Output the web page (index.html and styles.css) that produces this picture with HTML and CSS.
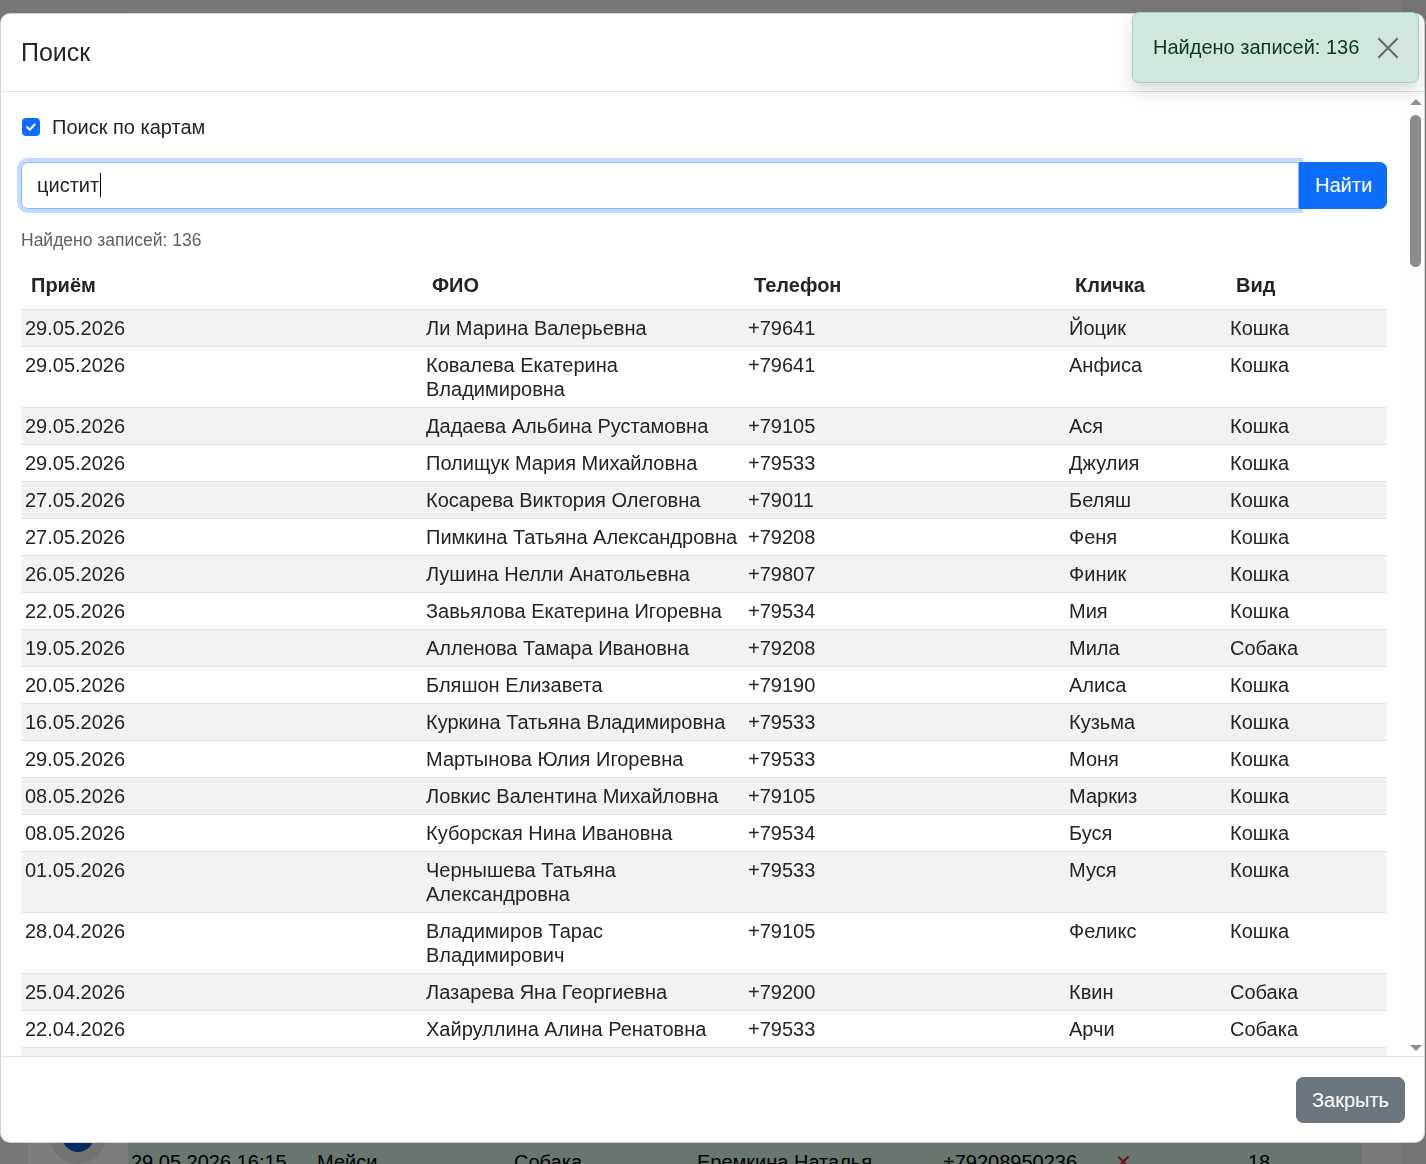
FILE: index.html
```html
<!DOCTYPE html>
<html lang="ru">
<head>
    <meta charset="UTF-8">
    <meta name="viewport" content="width=device-width, initial-scale=1.0">
    <title>Поиск</title>
    <link rel="stylesheet" href="styles.css">
</head>
<body>
    <!-- page behind the modal -->
    <div class="page">
        <aside class="page-side">
            <div class="side-card"><span class="side-avatar"></span></div>
        </aside>
        <main class="page-main">
            <div class="visit-row">
                <span class="v-time">29.05.2026 16:15</span>
                <span class="v-pet">Мейси</span>
                <span class="v-kind">Собака</span>
                <span class="v-owner">Еремкина Наталья</span>
                <span class="v-phone">+79208950236</span>
                <span class="v-mark">✕</span>
                <span class="v-num">18</span>
            </div>
        </main>
        <div class="page-edge"></div>
    </div>

    <div class="backdrop"></div>

    <div class="modal">
        <div class="modal-header">
            <h5 class="modal-title">Поиск</h5>
        </div>

        <div class="modal-main">
            <div class="modal-body">
                <label class="form-check">
                    <span class="check-box">
                        <svg width="12" height="12" viewBox="0 0 12 12"><path d="M2.2 6.3l2.5 2.5 5-5.3" fill="none" stroke="#fff" stroke-width="2" stroke-linecap="round" stroke-linejoin="round"/></svg>
                    </span>
                    Поиск по картам
                </label>

                <div class="search-group">
                    <div class="search-field">цистит<span class="caret"></span></div>
                    <button class="btn btn-primary">Найти</button>
                </div>

                <div class="found-text">Найдено записей: <span id="found-count">136</span></div>

                <table class="results">
                    <colgroup>
                        <col class="c-date">
                        <col class="c-name">
                        <col class="c-phone">
                        <col class="c-pet">
                        <col class="c-kind">
                    </colgroup>
                    <thead>
                        <tr>
                            <th>Приём</th>
                            <th>ФИО</th>
                            <th>Телефон</th>
                            <th>Кличка</th>
                            <th>Вид</th>
                        </tr>
                    </thead>
                    <tbody id="results-body"></tbody>
                </table>
            </div>

            <div class="scroll-rail">
                <span class="rail-arrow rail-up"></span>
                <span class="rail-thumb"></span>
                <span class="rail-rest"></span>
                <span class="rail-arrow rail-down"></span>
            </div>
        </div>

        <div class="modal-footer">
            <button class="btn btn-secondary">Закрыть</button>
        </div>
    </div>

    <div class="toast">
        <span class="toast-text">Найдено записей: 136</span>
        <button class="toast-close" aria-label="Закрыть">
            <svg width="22" height="22" viewBox="0 0 22 22"><path d="M2 2l18 18M20 2L2 20" stroke="#6b6b6b" stroke-width="2.2" stroke-linecap="round"/></svg>
        </button>
    </div>

    <script>
        const rows = [
            ['29.05.2026', 'Ли Марина Валерьевна', '+79641', 'Йоцик', 'Кошка'],
            ['29.05.2026', 'Ковалева Екатерина Владимировна', '+79641', 'Анфиса', 'Кошка'],
            ['29.05.2026', 'Дадаева Альбина Рустамовна', '+79105', 'Ася', 'Кошка'],
            ['29.05.2026', 'Полищук Мария Михайловна', '+79533', 'Джулия', 'Кошка'],
            ['27.05.2026', 'Косарева Виктория Олеговна', '+79011', 'Беляш', 'Кошка'],
            ['27.05.2026', 'Пимкина Татьяна Александровна', '+79208', 'Феня', 'Кошка'],
            ['26.05.2026', 'Лушина Нелли Анатольевна', '+79807', 'Финик', 'Кошка'],
            ['22.05.2026', 'Завьялова Екатерина Игоревна', '+79534', 'Мия', 'Кошка'],
            ['19.05.2026', 'Алленова Тамара Ивановна', '+79208', 'Мила', 'Собака'],
            ['20.05.2026', 'Бляшон Елизавета', '+79190', 'Алиса', 'Кошка'],
            ['16.05.2026', 'Куркина Татьяна Владимировна', '+79533', 'Кузьма', 'Кошка'],
            ['29.05.2026', 'Мартынова Юлия Игоревна', '+79533', 'Моня', 'Кошка'],
            ['08.05.2026', 'Ловкис Валентина Михайловна', '+79105', 'Маркиз', 'Кошка'],
            ['08.05.2026', 'Куборская Нина Ивановна', '+79534', 'Буся', 'Кошка'],
            ['01.05.2026', 'Чернышева Татьяна Александровна', '+79533', 'Муся', 'Кошка'],
            ['28.04.2026', 'Владимиров Тарас Владимирович', '+79105', 'Феликс', 'Кошка'],
            ['25.04.2026', 'Лазарева Яна Георгиевна', '+79200', 'Квин', 'Собака'],
            ['22.04.2026', 'Хайруллина Алина Ренатовна', '+79533', 'Арчи', 'Собака'],
            ['21.04.2026', 'Смирнова Ольга Петровна', '+79105', 'Барсик', 'Кошка'],
            ['19.04.2026', 'Егорова Анна Сергеевна', '+79208', 'Соня', 'Кошка']
        ];

        const body = document.getElementById('results-body');
        const total = 136;
        let html = '';
        for (let i = 0; i < total; i++) {
            const r = rows[i % rows.length];
            html += `<tr>${r.map(c => `<td>${c}</td>`).join('')}</tr>`;
        }
        body.innerHTML = html;
    </script>
</body>
</html>
```

FILE: styles.css
```css
html, body {
    margin: 0;
    height: 100%;
    overflow: hidden;
}

body {
    font-family: "Liberation Sans", Arial, sans-serif;
    font-size: 20px;
    color: #212529;
    background: #f0f0f0;
}

/* page behind */
.page {
    display: flex;
    height: 100%;
}

.page-side {
    width: 128px;
    background: #ececec;
    display: flex;
    justify-content: flex-end;
}

.side-card {
    width: 100px;
    margin-top: 1100px;
    background: #fafafa;
    display: flex;
    justify-content: center;
    align-items: flex-start;
    padding-top: 8px;
}

.side-avatar {
    width: 32px;
    height: 32px;
    border-radius: 50%;
    background: #0d5bc4;
    border: 12px solid #e6e6e6;
}

.page-main {
    width: 1234px;
    padding-top: 1143px;
}

.visit-row {
    display: flex;
    background: #d6eae0;
    padding: 7px 0 0 3px;
    height: 30px;
    line-height: 24px;
    color: #000;
}

.v-time { width: 186px; }
.v-pet { width: 197px; }
.v-kind { width: 183px; }
.v-owner { width: 246px; }
.v-phone { width: 172px; }
.v-mark { width: 133px; color: #c9303e; }

.page-edge {
    flex: 1;
    background: linear-gradient(to right, #f4f4f4 0 40px, #e8e8e8 40px);
}

.backdrop {
    position: fixed;
    inset: 0;
    background: rgba(0, 0, 0, 0.5);
}

/* modal */
.modal {
    position: fixed;
    top: 13px;
    left: 0;
    width: 1425px;
    height: 1130px;
    box-sizing: border-box;
    display: flex;
    flex-direction: column;
    background: #fff;
    border: 1px solid rgba(0, 0, 0, 0.175);
    border-radius: 10px;
    overflow: hidden;
}

.modal-header {
    padding: 20px 20px 19px;
    border-bottom: 1px solid #dee2e6;
}

.modal-title {
    margin: 0;
    font-size: 25px;
    font-weight: 400;
    line-height: 37.5px;
}

.modal-main {
    flex: 1;
    min-height: 0;
    display: flex;
}

.modal-body {
    flex: 1;
    min-width: 0;
    overflow: hidden;
    padding: 20px;
}

.scroll-rail {
    width: 17px;
    flex: none;
    display: flex;
    flex-direction: column;
    align-items: center;
    background: #fdfdfd;
}

.rail-arrow {
    height: 17px;
    flex: none;
    display: flex;
    align-items: center;
    justify-content: center;
}

.rail-arrow::before {
    content: "";
    border-left: 6px solid transparent;
    border-right: 6px solid transparent;
}

.rail-up {
    padding-top: 2px;
}

.rail-up::before {
    border-bottom: 6px solid #8f8f8f;
}

.rail-down::before {
    border-top: 6px solid #8f8f8f;
}

.rail-thumb {
    width: 11px;
    height: 152px;
    margin-top: 4px;
    border-radius: 6px;
    background: #8c8c8c;
    flex: none;
}

.rail-rest {
    flex: 1;
}

.form-check {
    display: flex;
    align-items: center;
    gap: 12px;
    line-height: 30px;
    padding-left: 1px;
}

.check-box {
    width: 18px;
    height: 18px;
    border-radius: 4px;
    background: #0d6efd;
    display: flex;
    align-items: center;
    justify-content: center;
}

.search-group {
    display: flex;
    margin-top: 20px;
}

.search-field {
    flex: 1;
    height: 47px;
    box-sizing: border-box;
    border: 1px solid #86b7fe;
    border-radius: 7px 0 0 7px;
    box-shadow: 0 0 0 4px rgba(13, 110, 253, 0.25);
    padding: 0 15px;
    display: flex;
    align-items: center;
    line-height: 30px;
}

.caret {
    display: inline-block;
    width: 1px;
    height: 24px;
    background: #000;
    margin-left: 1px;
}

.btn {
    font-family: inherit;
    font-size: 20px;
    line-height: 30px;
    border: 1px solid transparent;
    color: #fff;
    padding: 7px 15px;
    cursor: pointer;
    position: relative;
}

.btn-primary {
    width: 88px;
    background: #0d6efd;
    border-color: #0d6efd;
    border-radius: 0 7px 7px 0;
}

.btn-secondary {
    background: #6c757d;
    border-color: #6c757d;
    border-radius: 7px;
    padding: 7px 15px;
}

.found-text {
    margin-top: 18px;
    font-size: 17.5px;
    line-height: 26px;
    color: #5d6165;
}

.results {
    width: 100%;
    margin-top: 13px;
    border-collapse: collapse;
    table-layout: fixed;
}

.c-date { width: 401px; }
.c-name { width: 322px; }
.c-phone { width: 321px; }
.c-pet { width: 161px; }
.c-kind { width: 161px; }

.results th {
    text-align: left;
    font-weight: 700;
    line-height: 24px;
    padding: 7px 10px 12px;
    border-bottom: 1px solid #dee2e6;
}

.results td {
    line-height: 24px;
    padding: 6px 4px;
    vertical-align: top;
    border-bottom: 1px solid #dee2e6;
}

.results tbody tr:nth-child(odd) td {
    background: #f2f2f2;
}

.modal-footer {
    display: flex;
    justify-content: flex-end;
    padding: 20px 19px 19px;
    border-top: 1px solid #dee2e6;
}

/* toast */
.toast {
    position: fixed;
    top: 12px;
    right: 7px;
    width: 287px;
    height: 71px;
    box-sizing: border-box;
    display: flex;
    align-items: center;
    justify-content: space-between;
    padding: 0 19px 0 20px;
    background: #d1e7dd;
    border: 1px solid #a3cfbb;
    border-radius: 7px;
    color: #0a3622;
    box-shadow: 0 8px 16px rgba(0, 0, 0, 0.15);
}

.toast-close {
    background: none;
    border: 0;
    padding: 0;
    display: flex;
    cursor: pointer;
}
```
